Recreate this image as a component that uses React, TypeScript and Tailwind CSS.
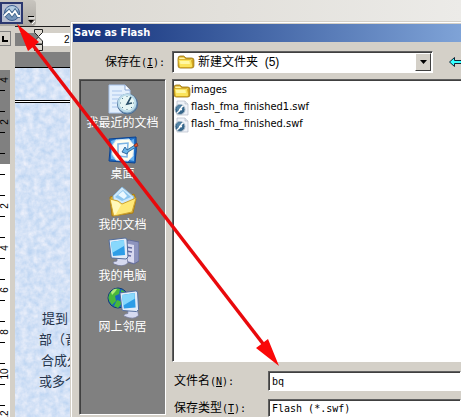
import { useId, useState } from "react"
import type { ReactNode } from "react"

const files = [
  { name: "images", type: "folder" },
  { name: "flash_fma_finished1.swf", type: "swf" },
  { name: "flash_fma_finished.swf", type: "swf" },
]

// labels run down the vertical ruler, empty entries are plain ticks
const rulerTop = ["4", "", "2", ""]
const rulerBottom = ["", "2", "", "4", "", "6", "", "8", "", "10", "", "12"]

const docLines = ["提到", "部（音", "合成久", "或多个"]
const docIndents = ["pl-[27px]", "pl-[24px]", "pl-[26px]", "pl-[24px]"]

const sunken =
  "border border-t-[#606060] border-l-[#606060] border-b-white border-r-white shadow-[inset_1px_1px_0_#404040]"

function FolderIcon() {
  return (
    <svg width="18" height="16" viewBox="0 0 16 16" preserveAspectRatio="none" className="shrink-0">
      <path d="M1 4q0-2 2-2h3l2 2h5q2 0 2 2v6q0 2-2 2H3q-2 0-2-2z" fill="#d8a71c" stroke="#9a7718" strokeWidth=".8" />
      <path d="M2 3.5h4l1.5 1.5H13v2H2z" fill="#fff6a8" />
      <path d="M1 5.5h11q1 0 1 1l1 6q-1 1-2 1H3q-1 0-1-1z" fill="#fbe45c" stroke="#c99b17" strokeWidth=".7" />
      <path d="M2.5 7H11l.5 3H3z" fill="#fff8a4" />
    </svg>
  )
}

function SwfIcon() {
  return (
    <svg width="18" height="16" viewBox="-1 0 18 16" className="shrink-0">
      <path d="M3 1h8l3 3v11H3z" fill="#eef2f8" stroke="#b4bcc8" strokeWidth=".7" />
      <path d="M11 1v3h3" fill="#dfe5ec" stroke="#aeb6c2" strokeWidth=".6" />
      <circle cx="6" cy="9.5" r="5" fill="#36668a" stroke="#a9bac7" strokeWidth="1" />
      <circle cx="5.5" cy="8.2" r="3" fill="#5484a5" />
      <path d="M9.500 6C6 6.300 6.700 12 3 12.600M5 9.500h3" fill="none" stroke="#fff" strokeWidth="1.4" />
    </svg>
  )
}

function RecentIcon() {
  return (
    <svg width="32" height="32" viewBox="0 0 32 32">
      <path d="M2 2h16l5 5v23H2z" fill="#e3effc" stroke="#a9c5ec" />
      <path d="M18 2v5h5" fill="#fff" stroke="#86a5d4" />
      <path d="M5 8h10M5 12h12M5 16h10M5 20h6M5 24h6" stroke="#a9c5ec" />
      <circle cx="20.500" cy="21" r="10" fill="#7296b5" stroke="#476d98" />
      <circle cx="20" cy="20" r="8.500" fill="#e6f6f5" stroke="#b8d9e8" strokeWidth="2" />
      <path d="M20 13v1M20 26v1M13 20h1M26 20h1M15 15l1 1M15 25l1-1M25 25l-1-1" stroke="#567f91" />
      <path d="m24 14-4 7 5-1" fill="none" stroke="#29506a" strokeWidth="1.600" />
    </svg>
  )
}

function DesktopIcon() {
  return (
    <svg width="32" height="32" viewBox="0 0 32 32">
      <path d="m2 5 27-2q1 14-1 26L2 27q2-11 0-22z" fill="#2170c6" stroke="#0a4292" />
      <path d="M4 7 10 5 5 13zM27 5l-3 1 3 5zM4 25v-6l6 7zM27 27v-7l-5 6z" fill="#6bb3ef" />
      <path d="m9 6 13-1 5 6-1 11-5 5-12-1-4-6V12z" fill="#fffef0" stroke="#c8e1f3" />
      <path d="m11 10 10-1-1 14-9-1z" fill="#eff9ff" stroke="#7bb4e4" strokeWidth="1.500" />
      <path d="m15 18 3-5 2 3 8-5 1 2-8 5-1 2z" fill="#69b5e8" stroke="#1c568e" strokeWidth=".8" />
      <path d="m27 11 3-2 1 3-3 1z" fill="#df552b" stroke="#7f2c20" strokeWidth=".7" />
    </svg>
  )
}

function DocumentsIcon() {
  return (
    <svg width="32" height="32" viewBox="0 0 32 32">
      <path d="m3 12 8-2 4 3 12-4 2 5-3 14-21 3z" fill="#dfad29" stroke="#a87c14" />
      <path d="M15 2 27 12 21 27 7 21 6 11z" fill="#cee9fb" stroke="#89b8dc" />
      <path d="m16 5 8 7-9 4-7-4z" fill="#8ec7ef" />
      <path d="m11 10 5-4 4 5-3 3z" fill="#eaf8ff" />
      <path d="m3 14 8 2 4 3 14-6-4 14-18 4z" fill="#ffe978" stroke="#cda332" />
      <path d="m4 15 7 2 3 3-5 9-2 1z" fill="#fff8bb" />
    </svg>
  )
}

function Monitor() {
  return (
    <>
      <path d="m10 21 10 1 1 5q-5 5-14 1-3-2 3-3z" fill="#d6daf0" stroke="#737a9b" strokeWidth=".8" />
      <path d="M2 4 18 2q2 0 2 2l1 17-2 2-14-1q-1 0-1-2z" fill="#e2ecf8" stroke="#526c9c" />
      <path d="m4 6 13-2 1 15-12 1z" fill="#2d9de7" />
      <path d="m4 6 13-2v6L5 17z" fill="#88d8fc" />
    </>
  )
}

function ComputerIcon() {
  return (
    <svg width="32" height="32" viewBox="0 0 32 32">
      <path d="m17 6 5-2 10 2v19l-5 3-10-3z" fill="#8e94be" stroke="#656d98" />
      <path d="m17 7 10 2v18l-10-3z" fill="#d9daf0" />
      <path d="m19 11 6 1M19 15l6 1M19 19l5 1" stroke="#676ea4" strokeWidth="1.500" />
      <Monitor />
    </svg>
  )
}

function NetworkIcon() {
  return (
    <svg width="32" height="32" viewBox="0 0 32 32">
      <circle cx="11" cy="11" r="10" fill="#1569bd" stroke="#153c75" />
      <path d="M3 6q5-6 10-4l-1 5-4 2 1 5-4 4q-6-6-2-12zM14 3q5 1 6 6l-5 4zM10 13l6 2-5 6-4-2z" fill="#48b83b" />
      <path d="M4 5q3-4 6-3L8 5 5 8z" fill="#b1ed7a" />
      <g transform="translate(11 2) scale(.98)">
        <Monitor />
      </g>
    </svg>
  )
}

const places: { label: string; icon: ReactNode }[] = [
  { label: "我最近的文档", icon: <RecentIcon /> },
  { label: "桌面", icon: <DesktopIcon /> },
  { label: "我的文档", icon: <DocumentsIcon /> },
  { label: "我的电脑", icon: <ComputerIcon /> },
  { label: "网上邻居", icon: <NetworkIcon /> },
]

function RulerMarks({ marks }: { marks: string[] }) {
  return (
    <>
      {marks.map((mark, i) => (
        <div key={i} className="flex h-[21px] shrink-0 flex-col">
          <span className="flex h-5 w-[10px] items-center justify-center">
            <span className="-rotate-90 text-[10px] leading-none">{mark}</span>
          </span>
          <span className="h-px w-[5px] bg-black" />
        </div>
      ))}
    </>
  )
}

function PaperTexture() {
  const id = useId()
  return (
    <svg className="absolute inset-0 h-full w-full" aria-hidden="true">
      <filter id={id} colorInterpolationFilters="sRGB">
        <feTurbulence type="fractalNoise" baseFrequency="0.16" numOctaves="3" seed="4" />
        <feColorMatrix values="0.26 0 0 0 0.7  0.15 0 0 0 0.81  0.05 0 0 0 0.94  0 0 0 0 1" />
      </filter>
      <rect width="100%" height="100%" filter={`url(#${id})`} />
    </svg>
  )
}

function Editor() {
  return (
    <div className="absolute inset-0 flex flex-col">
      <header className="flex h-[26px] shrink-0 bg-linear-to-r from-[#d9d6cf] to-[#ecebe8]">
        <div className="flex w-9 items-end rounded-r bg-linear-to-b from-[#c8c5bf] to-[#aaa7a1]">
          <button aria-label="Save as Flash" className="mb-[2px] flex h-[22px] w-[23px] shrink-0 items-center justify-center border-2 border-[#2b376f] bg-[#b9bfd0]">
            <svg width="18" height="18" viewBox="0 0 18 18">
              <circle cx="9" cy="9" r="7.500" fill="#7596bb" stroke="#405f91" />
              <path d="M3 5q6-6 12 0l-1 2H4z" fill="#b4cce2" />
              <path d="m1 12 5-5 3 4 3-4 3 5h2" fill="none" stroke="#40658d" strokeWidth="3.500" />
              <path d="m1 12 5-5 3 4 3-4 3 5h2" fill="none" stroke="#fff" strokeWidth="1.800" />
            </svg>
          </button>
          <svg width="13" height="11" viewBox="0 0 13 11" className="shrink-0">
            <path d="M5 1h6v1H5zM5 5h6L8 8z" fill="#000" />
            <path d="M6 3h6M9 9l3-3" stroke="#fff" />
          </svg>
        </div>
      </header>
      <div className="flex min-h-0 flex-1">
        <div className="flex w-[15px] shrink-0 flex-col pt-[5px] text-black">
          <div className="mb-6 flex h-[15px] w-[11px] shrink-0 items-center justify-center border border-l-0 border-[#808080]">
            <svg width="6" height="6" viewBox="0 0 6 6">
              <path d="M0 0h2v4h4v2H0z" />
            </svg>
          </div>
          <div className="flex h-[94px] w-[10px] shrink-0 flex-col overflow-hidden bg-[#808080]">
            <RulerMarks marks={rulerTop} />
          </div>
          <div className="flex min-h-0 w-[10px] flex-1 flex-col overflow-hidden bg-white pt-[10px]">
            <span className="h-px w-[5px] shrink-0 bg-black" />
            <RulerMarks marks={rulerBottom} />
          </div>
        </div>
        <main className="flex min-w-0 flex-1 flex-col">
          <div className="mb-[6px] flex h-5 shrink-0 items-end border-t border-[#202020]">
            <div className="h-[13px] w-[23px] bg-[#808080]" />
            <div className="flex h-[13px] flex-1 items-center bg-white pl-[26px] text-[10px]">2</div>
          </div>
          <div className="h-4 shrink-0 border-b border-black bg-[#808080]" />
          <div className="relative min-h-0 flex-1 overflow-hidden">
            <PaperTexture />
            <div className="relative flex flex-col pt-8 text-[#26344a]">
              <div className="mb-[205px] h-[3px] border-y border-black bg-white" />
              {docLines.map((line, i) => (
                <p key={line} className={`h-[21px] text-[13px] leading-[21px] whitespace-nowrap ${docIndents[i]}`}>
                  {line}
                </p>
              ))}
            </div>
          </div>
        </main>
      </div>
      <svg className="absolute top-[29px] left-[34px]" width="9" height="23" viewBox="0 0 9 23">
        <path d="M.5.500h8v3l-4 4-4-4zM.500 15v-3l4-4 4 4v3zM.500 15.500h8v6h-8z" fill="#ddd9d1" stroke="#222" />
      </svg>
    </div>
  )
}

function SaveDialog() {
  const [fileName, setFileName] = useState("bq")

  return (
    <section
      role="dialog"
      aria-label="Save as Flash"
      className="absolute top-[21px] right-0 bottom-0 left-[70px] flex flex-col border-t border-l border-[#d4d0c8] bg-[#d4d0c8] shadow-[inset_1px_1px_0_#fff]"
    >
      <h1 className="mt-[2px] ml-[2px] h-[18px] shrink-0 bg-linear-to-r from-[#15307a] to-[#7fa3d7] pl-px font-['DejaVu_Sans_Condensed','DejaVu_Sans',sans-serif] text-[11px] leading-[18px] font-bold text-white">
        Save as Flash
      </h1>
      <div className="mt-[9px] flex h-[22px] shrink-0 items-center pl-[34px]">
        <label htmlFor="folder" className="w-[67px] shrink-0">
          保存在<Key k="I" />
        </label>
        <div className={`flex h-[22px] min-w-0 flex-1 items-center bg-white pl-1 ${sunken}`}>
          <FolderIcon />
          <select id="folder" className="h-full min-w-0 flex-1 appearance-none pl-[3px] text-[12px] outline-none">
            <option>新建文件夹&nbsp;&nbsp;(5)</option>
          </select>
          <span className="pointer-events-none mr-px flex h-[18px] w-4 shrink-0 items-center justify-center border border-t-white border-r-[#404040] border-b-[#404040] border-l-white bg-[#d4d0c8]">
            <svg width="7" height="4" viewBox="0 0 7 4">
              <path d="M0 0h7L3.500 4z" />
            </svg>
          </span>
        </div>
        <button aria-label="后退" className="ml-4 w-3 shrink-0 overflow-hidden">
          <svg width="18" height="12" viewBox="0 0 18 12">
            <path d="M.5 6 5.500 1.500v3h12v3h-12v3z" fill="#3ff" stroke="#123" />
          </svg>
        </button>
      </div>
      <div className="mt-[6px] flex min-h-0 flex-1 pl-2">
        <nav className={`mb-[2px] flex w-[87px] shrink-0 flex-col bg-[#808080] pt-[3px] ${sunken}`}>
          {places.map((place) => (
            <button key={place.label} className="flex h-[51px] shrink-0 flex-col items-center text-white">
              {place.icon}
              <span className="text-[12px] leading-4 whitespace-nowrap">{place.label}</span>
            </button>
          ))}
        </nav>
        <div className="ml-[6px] flex min-w-0 flex-1 flex-col">
          <ul className={`min-h-0 flex-1 border-r-0 bg-white pt-[2px] ${sunken}`}>
            {files.map((file) => (
              <li key={file.name}>
                <button className="flex h-[17px] items-center font-['DejaVu_Sans_Condensed','DejaVu_Sans',sans-serif] text-[11px]">
                  {file.type === "folder" ? <FolderIcon /> : <SwfIcon />}
                  {file.name}
                </button>
              </li>
            ))}
          </ul>
          <div className="mt-[9px] flex h-5 shrink-0 items-center">
            <label htmlFor="filename" className="w-24 shrink-0 pl-[2px]">
              文件名<Key k="N" />
            </label>
            <input
              id="filename"
              value={fileName}
              onChange={(e) => setFileName(e.target.value)}
              className={`h-full min-w-0 flex-1 bg-white pl-[3px] font-['DejaVu_Sans_Mono',monospace] text-[10px] outline-none ${sunken}`}
            />
          </div>
          <div className="mt-2 flex h-[18px] shrink-0 items-center">
            <label htmlFor="filetype" className="w-24 shrink-0 pl-[2px]">
              保存类型<Key k="T" />
            </label>
            <select
              id="filetype"
              className={`h-full min-w-0 flex-1 appearance-none bg-white pl-[3px] font-['DejaVu_Sans_Mono',monospace] text-[10px] outline-none ${sunken}`}
            >
              <option>Flash (*.swf)</option>
            </select>
          </div>
        </div>
      </div>
    </section>
  )
}

// access key shown after a label
function Key({ k }: { k: string }) {
  return (
    <span className="font-['DejaVu_Sans_Mono',monospace] text-[10px]">
      (<u>{k}</u>):
    </span>
  )
}

export default function App() {
  return (
    <div className="relative h-screen overflow-hidden bg-[#d4d0c8] font-['Liberation_Sans','Noto_Sans_CJK_SC',sans-serif] text-[12px] text-black">
      <Editor />
      <SaveDialog />
      <svg className="pointer-events-none absolute top-0 left-0" width="290" height="375" viewBox="0 0 290 375">
        <path d="M32 44 264 345" stroke="#e9090c" strokeWidth="3.500" />
        <path d="m17 24 22 18-11 9zM279 366l-23-18 12-9z" fill="#fa0808" />
      </svg>
    </div>
  )
}
